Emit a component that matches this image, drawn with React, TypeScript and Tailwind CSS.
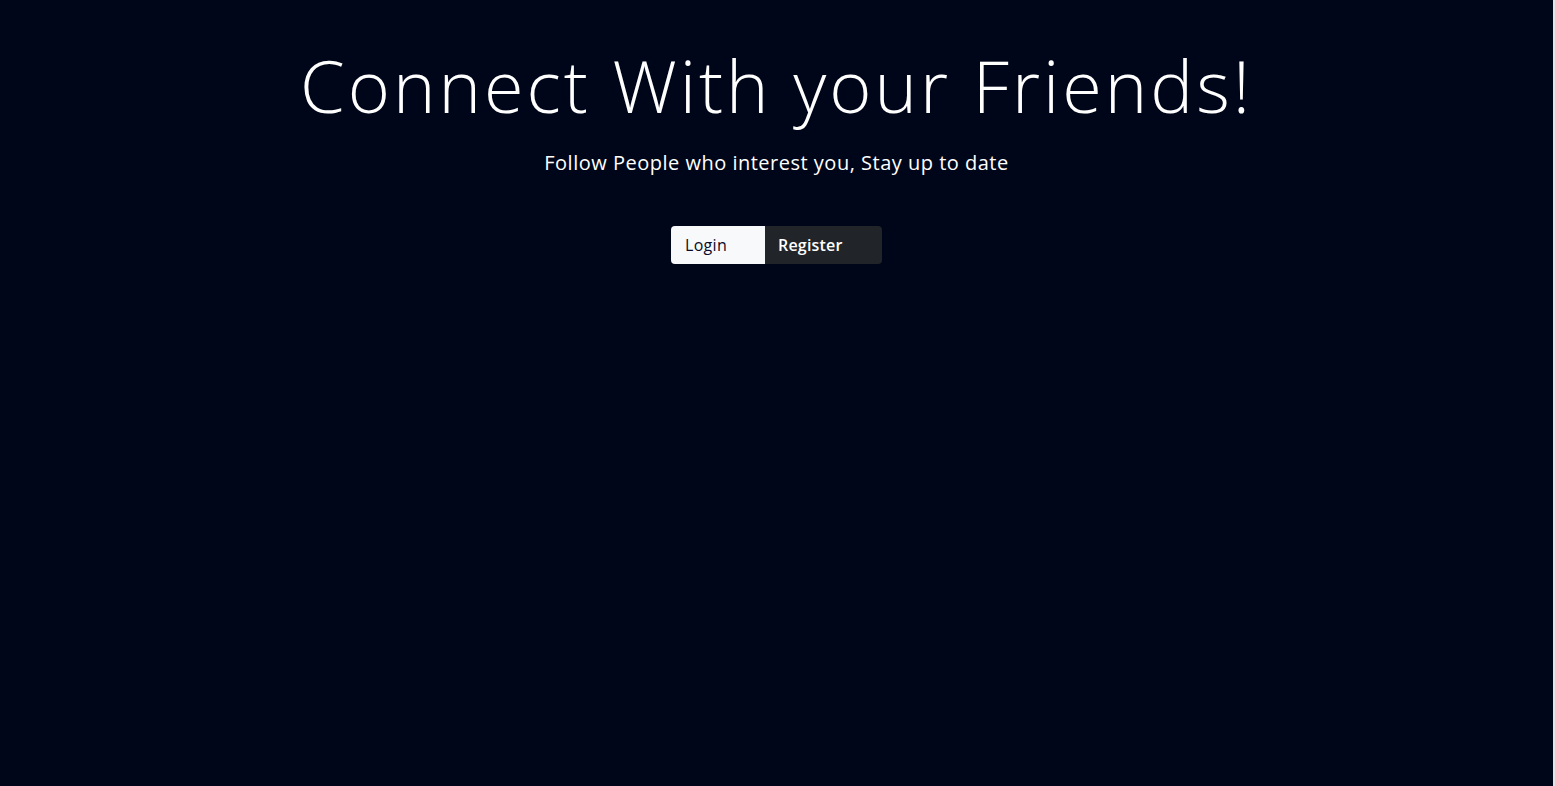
import React from 'react';

const font = { fontFamily: '"Open Sans", "Noto Sans", Arial, sans-serif' };

export default function App() {
  return (
    <div className="flex h-[786px] w-full bg-[#000619]" style={font}>
      <main className="flex flex-1 flex-col items-center pt-[42px] text-white">
        <h1 className="text-[72px] font-light leading-[1.2] tracking-[3px]">Connect With your Friends!</h1>
        <p className="mt-[20px] text-[20px] leading-[1.5] tracking-[0.5px]">Follow People who interest you, Stay up to date</p>
        <div className="mt-[48px] flex">
          <button className="h-[38px] w-[94px] rounded-l-[4px] bg-[#f8f9fa] pl-[14px] text-left text-[16px] tracking-[0.3px] text-[#0b0b2a]">
            Login
          </button>
          <button className="h-[38px] w-[117px] rounded-r-[4px] bg-[#212529] pl-[13px] text-left text-[16px] font-semibold tracking-[0.2px] text-white">
            Register
          </button>
        </div>
      </main>
      <div className="w-[2px] bg-[#e4e4e4]" />
    </div>
  );
}
